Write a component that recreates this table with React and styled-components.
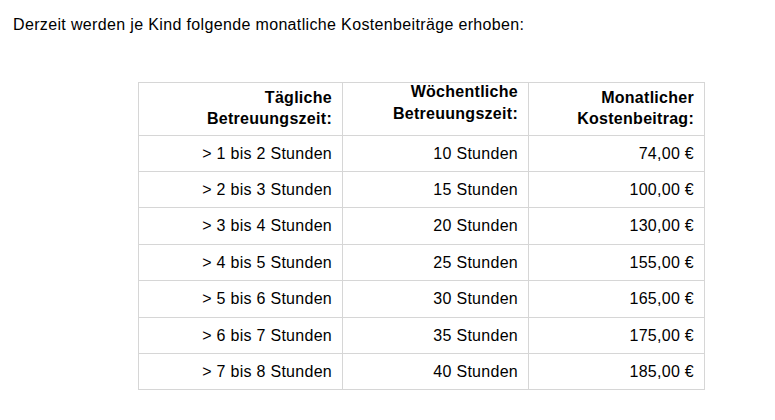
import React from 'react';
import styled, { createGlobalStyle } from 'styled-components';

const rows = [
    ['> 1 bis 2 Stunden', '10 Stunden', '74,00 €'],
    ['> 2 bis 3 Stunden', '15 Stunden', '100,00 €'],
    ['> 3 bis 4 Stunden', '20 Stunden', '130,00 €'],
    ['> 4 bis 5 Stunden', '25 Stunden', '155,00 €'],
    ['> 5 bis 6 Stunden', '30 Stunden', '165,00 €'],
    ['> 6 bis 7 Stunden', '35 Stunden', '175,00 €'],
    ['> 7 bis 8 Stunden', '40 Stunden', '185,00 €'],
];

const headers = [
    { lines: ['Tägliche', 'Betreuungszeit:'], lift: 0 },
    { lines: ['Wöchentliche', 'Betreuungszeit:'], lift: 5.5 },
    { lines: ['Monatlicher', 'Kostenbeitrag:'], lift: 0 },
];

const App = () => {
    return (
        <Page>
            <GlobalStyle />
            <Intro>Derzeit werden je Kind folgende monatliche Kostenbeiträge erhoben:</Intro>
            <FeeTable>
                <colgroup>
                    <col style={{ width: 204 }} />
                    <col style={{ width: 186 }} />
                    <col style={{ width: 176 }} />
                </colgroup>
                <thead>
                    <tr>
                        {headers.map((h, i) => (
                            <HeadCell key={i}>
                                <HeadLabel $lift={h.lift}>
                                    {h.lines[0]}<br />{h.lines[1]}
                                </HeadLabel>
                            </HeadCell>
                        ))}
                    </tr>
                </thead>
                <tbody>
                    {rows.map((r, i) => (
                        <tr key={i}>
                            {r.map((c, j) => <Cell key={j}>{c}</Cell>)}
                        </tr>
                    ))}
                </tbody>
            </FeeTable>
        </Page>
    );
};

const GlobalStyle = createGlobalStyle`
    body {
        margin: 0;
        background: #ffffff;
        font-family: "Liberation Sans", Arial, sans-serif;
        color: #000000;
    }
`
const Page = styled.div`
    padding: 0 13px;
`
const Intro = styled.p`
    margin: 16px 0 0 0;
    font-size: 16px;
    line-height: 18.4px;
    letter-spacing: 0.35px;
`
const FeeTable = styled.table`
    margin: 47.6px 0 0 125px;
    width: 566px;
    table-layout: fixed;
    border-collapse: collapse;
    font-size: 16px;
    letter-spacing: 0.28px;
`
const HeadCell = styled.th`
    border: 1px solid #d6d6d6;
    text-align: right;
    vertical-align: top;
    font-weight: bold;
    line-height: 21.5px;
    padding: 3.5px 10px 5px 10px;
`
const HeadLabel = styled.div`
    margin-top: ${p => -p.$lift}px;
    margin-bottom: ${p => p.$lift}px;
`
const Cell = styled.td`
    border: 1px solid #d6d6d6;
    text-align: right;
    line-height: 19.4px;
    padding: 8px 10px;
`

export default App;
